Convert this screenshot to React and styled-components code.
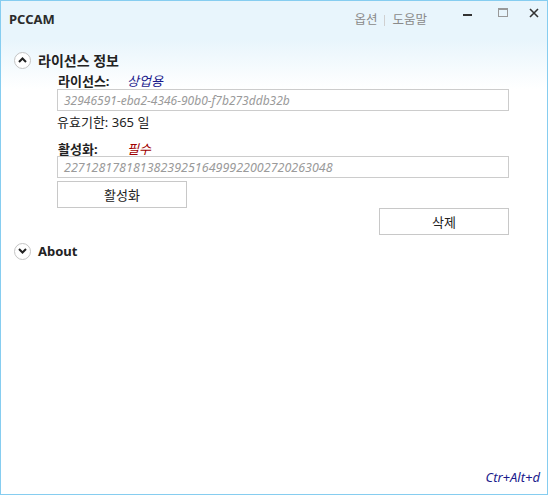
import React from "react";
import styled, { createGlobalStyle } from "styled-components";

const GlobalStyle = createGlobalStyle`
  html, body {
    margin: 0;
    padding: 0;
    background: #ffffff;
  }
  * {
    box-sizing: border-box;
  }
`;

const FONT = `"Noto Sans", "Noto Sans CJK KR", sans-serif`;

const Window = styled.div`
  width: 548px;
  height: 495px;
  border: 1px solid #86cdf0;
  background: linear-gradient(#e8f5fc 0px, #e8f5fc 38px, #ffffff 88px);
  display: flex;
  flex-direction: column;
  font-family: ${FONT};
  font-size: 13px;
  color: #222;
`;

const TitleBar = styled.div`
  height: 38px;
  display: flex;
  align-items: flex-start;
  padding-left: 8px;
`;

const Title = styled.div`
  font-weight: bold;
  font-size: 13px;
  line-height: 36px;
  color: #2b2b2b;
  flex: 1;
`;

const Menu = styled.div`
  display: flex;
  align-items: center;
  gap: 7px;
  color: #8a8a8a;
  font-size: 12.5px;
  line-height: 38px;
  margin-right: 26px;
`;

const Sep = styled.span`
  width: 1px;
  height: 11px;
  background: #d0d0d0;
`;

const Controls = styled.div`
  display: flex;
  align-items: flex-start;
  height: 24px;
  margin-right: 1px;
`;

const CtrlBtn = styled.div`
  width: ${(p) => p.$w}px;
  height: 24px;
  display: flex;
  align-items: center;
  justify-content: center;
`;

const Content = styled.div`
  flex: 1;
  display: flex;
  flex-direction: column;
  padding: 11px 38px 0 13px;
`;

const SectionHead = styled.div`
  display: flex;
  align-items: center;
  height: 20px;
  gap: 7px;
  margin-top: ${(p) => p.$mt || 0}px;
  font-weight: bold;
  font-size: ${(p) => p.$size || 13}px;
  color: #222;
`;

const Chevron = styled.div`
  width: 17px;
  height: 17px;
  border-radius: 50%;
  border: 1px solid #c4c4c4;
  background: #fff;
  display: flex;
  align-items: center;
  justify-content: center;
`;

const Body = styled.div`
  display: flex;
  flex-direction: column;
  padding-left: 43px;
`;

const LabelRow = styled.div`
  display: flex;
  align-items: center;
  height: ${(p) => p.$h || 17}px;
  margin-top: ${(p) => p.$mt || 0}px;
`;

const Label = styled.span`
  font-weight: bold;
  width: 70px;
  padding-left: 1px;
`;

const Tag = styled.span`
  font-style: italic;
  color: ${(p) => p.$color};
`;

const Field = styled.div`
  height: 22px;
  border: 1px solid #cccccc;
  background: #fff;
  display: flex;
  align-items: center;
  padding-left: 6px;
  font-style: italic;
  font-size: ${(p) => p.$size || 12}px;
  color: #9a9a9a;
`;

const Text = styled.div`
  line-height: 18px;
  margin-top: 2px;
`;

const Button = styled.div`
  width: 130px;
  height: 27px;
  border: 1px solid #c8c8c8;
  background: #fff;
  display: flex;
  align-items: center;
  justify-content: center;
  color: #222;
  margin-top: ${(p) => p.$mt || 0}px;
  align-self: ${(p) => (p.$right ? "flex-end" : "flex-start")};
`;

const Footer = styled.div`
  display: flex;
  justify-content: flex-end;
  padding: 0 7px 8px 0;
  font-style: italic;
  color: #1a1a8c;
`;

const Up = () => (
  <svg width="9" height="6" viewBox="0 0 9 6">
    <path d="M1 5 L4.5 1.5 L8 5" fill="none" stroke="#222" strokeWidth="2" />
  </svg>
);

const Down = () => (
  <svg width="9" height="6" viewBox="0 0 9 6">
    <path d="M1 1 L4.5 4.5 L8 1" fill="none" stroke="#222" strokeWidth="2" />
  </svg>
);

export default function App() {
  return (
    <>
      <GlobalStyle />
      <Window>
        <TitleBar>
          <Title>PCCAM</Title>
          <Menu>
            <span>옵션</span>
            <Sep />
            <span>도움말</span>
          </Menu>
          <Controls>
            <CtrlBtn $w={30}>
              <svg width="10" height="10" viewBox="0 0 10 10">
                <rect x="0" y="6" width="9" height="2" fill="#333" />
              </svg>
            </CtrlBtn>
            <CtrlBtn $w={39}>
              <svg width="10" height="10" viewBox="0 0 10 10">
                <rect x="0.5" y="0.5" width="9" height="8" fill="none" stroke="#999" />
                <rect x="0.5" y="0.5" width="9" height="1.5" fill="#999" />
              </svg>
            </CtrlBtn>
            <CtrlBtn $w={24}>
              <svg width="10" height="10" viewBox="0 0 10 10">
                <path d="M1 1 L9 9 M9 1 L1 9" stroke="#333" strokeWidth="1.6" />
              </svg>
            </CtrlBtn>
          </Controls>
        </TitleBar>

        <Content>
          <SectionHead $size={14}>
            <Chevron>
              <Up />
            </Chevron>
            라이선스 정보
          </SectionHead>
          <Body>
            <LabelRow $mt={2}>
              <Label>라이선스:</Label>
              <Tag $color="#1a1a8c">상업용</Tag>
            </LabelRow>
            <Field>32946591-eba2-4346-90b0-f7b273ddb32b</Field>
            <Text>유효기한: 365 일</Text>
            <LabelRow $mt={9} $h={16}>
              <Label>활성화:</Label>
              <Tag $color="#a00000">필수</Tag>
            </LabelRow>
            <Field $size={12.5}>227128178181382392516499922002720263048</Field>
            <Button $mt={3}>활성화</Button>
            <Button $right>삭제</Button>
          </Body>
          <SectionHead $mt={6}>
            <Chevron>
              <Down />
            </Chevron>
            About
          </SectionHead>
        </Content>

        <Footer>Ctr+Alt+d</Footer>
      </Window>
    </>
  );
}
